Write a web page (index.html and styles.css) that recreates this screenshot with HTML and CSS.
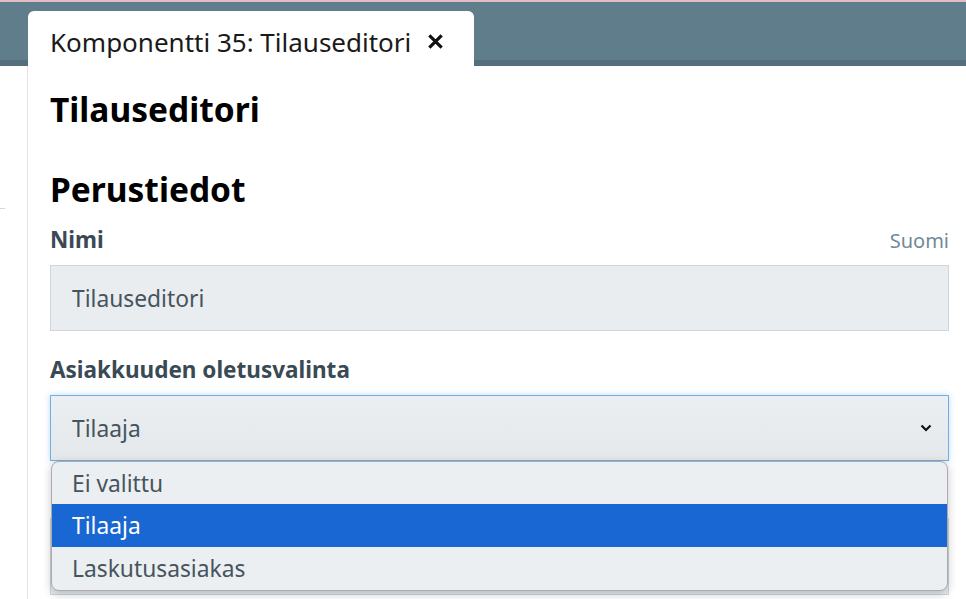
FILE: index.html
```html
<!DOCTYPE html>
<html lang="fi">
<head>
<meta charset="utf-8">
<title>Tilauseditori</title>
<link rel="stylesheet" href="styles.css">
</head>
<body>
<div class="topline"></div>
<header class="header">
  <div class="tab">
    <span class="tab-title">Komponentti 35: Tilauseditori</span>
    <svg class="tab-close" width="17" height="17" viewBox="0 0 16 16"><path d="M2.2 2.2 L13.8 13.8 M13.8 2.2 L2.2 13.8" stroke="#111" stroke-width="3" stroke-linecap="butt"/></svg>
  </div>
</header>
<div class="main">
  <aside class="sidebar"><div class="side-rule"></div></aside>
  <section class="content">
    <h1 class="title">Tilauseditori</h1>
    <h2 class="section">Perustiedot</h2>
    <div class="field-head first">
      <label class="label">Nimi</label>
      <span class="lang">Suomi</span>
    </div>
    <div class="input">Tilauseditori</div>
    <div class="field-head second">
      <label class="label">Asiakkuuden oletusvalinta</label>
    </div>
    <div class="select-wrap">
      <div class="select">
        <span>Tilaaja</span>
        <svg class="chev" width="12" height="8" viewBox="0 0 12 8"><path d="M1.5 1.5 L6 6 L10.5 1.5" fill="none" stroke="#111" stroke-width="2.2"/></svg>
      </div>
      <div class="below"></div>
      <ul class="dropdown">
        <li class="opt">Ei valittu</li>
        <li class="opt selected">Tilaaja</li>
        <li class="opt">Laskutusasiakas</li>
      </ul>
    </div>
  </section>
</div>
</body>
</html>
```
FILE: styles.css
```css
html, body {
  margin: 0;
  padding: 0;
  background: #ffffff;
  font-family: "Noto Sans", "Open Sans", sans-serif;
  overflow: hidden;
}
.topline {
  height: 2px;
  background: #e2bcc4;
}
.header {
  height: 58px;
  background: #607d8b;
  border-bottom: 6px solid #566f7c;
  display: flex;
  align-items: flex-end;
  padding-left: 28px;
}
.tab {
  height: 55px;
  margin-bottom: -6px;
  background: #ffffff;
  border-radius: 6px 6px 0 0;
  display: flex;
  align-items: center;
  padding: 6px 30px 0 22px;
  box-sizing: border-box;
  gap: 16px;
}
.tab-title {
  font-size: 26px;
  color: #1a1a1a;
}
.tab-close {
  display: block;
}
.main {
  display: flex;
  min-height: 533px;
}
.sidebar {
  width: 27px;
  border-right: 1px solid #e4e4e4;
  flex: none;
}
.side-rule {
  margin-top: 142px;
  width: 5px;
  height: 1px;
  background: #d8d8d8;
}
.content {
  flex: 1;
  padding: 0 17px 0 22px;
}
.title {
  margin: 21px 0 0;
  font-size: 33.5px;
  line-height: 44px;
  font-weight: 700;
  color: #000;
}
.section {
  margin: 36px 0 0;
  font-size: 33.5px;
  line-height: 44px;
  font-weight: 700;
  color: #000;
}
.field-head {
  display: flex;
  justify-content: space-between;
  align-items: baseline;
}
.field-head.first { margin-top: 14px; }
.field-head.second { margin-top: 24px; }
.label {
  font-size: 22.5px;
  font-weight: 700;
  color: #3a4a55;
  line-height: 30px;
}
.lang {
  font-size: 20px;
  color: #6f8a97;
}
.input {
  margin-top: 10px;
  height: 66px;
  box-sizing: border-box;
  background: #e9edf0;
  border: 1px solid #cdd6dc;
  display: flex;
  align-items: center;
  padding-left: 21px;
  font-size: 22.8px;
  color: #46545e;
}
.select-wrap {
  position: relative;
  margin-top: 10px;
}
.select {
  height: 66px;
  box-sizing: border-box;
  background: linear-gradient(#eceff1, #e5e8ea);
  border: 1px solid #70aee6;
  box-shadow: 0 0 6px rgba(110, 170, 230, 0.45);
  display: flex;
  align-items: center;
  justify-content: space-between;
  padding: 0 16px 0 21px;
  font-size: 22.8px;
  color: #46545e;
}
.below {
  height: 75px;
  margin-top: 57px;
  border: 1px solid #cdd6dc;
  background: #e9edf0;
}
.dropdown {
  position: absolute;
  left: 1px;
  right: 1px;
  top: 66px;
  margin: 0;
  padding: 0;
  list-style: none;
  background: #eceff1;
  border: 1px solid #a9abad;
  border-radius: 8px;
  overflow: hidden;
  box-shadow: 0 3px 10px rgba(0, 0, 0, 0.22);
}
.opt {
  height: 43px;
  display: flex;
  align-items: center;
  padding-left: 20px;
  font-size: 22.8px;
  color: #46545e;
}
.opt:first-child { height: 42px; }
.opt.selected {
  background: #1967d2;
  color: #ffffff;
}
```
